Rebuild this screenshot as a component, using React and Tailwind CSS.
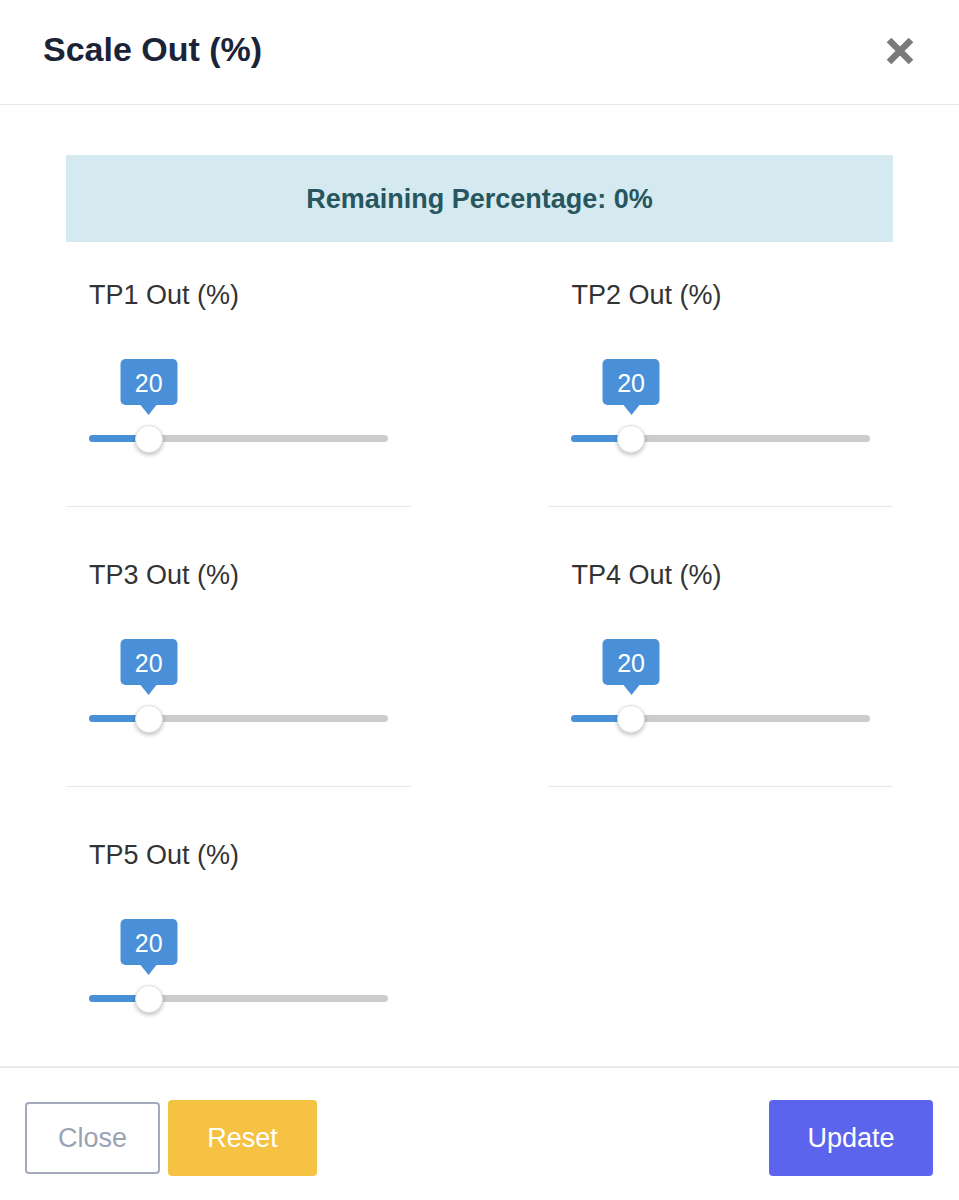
const targets = [
  { name: "TP1", value: 20 },
  { name: "TP2", value: 20 },
  { name: "TP3", value: 20 },
  { name: "TP4", value: 20 },
  { name: "TP5", value: 20 },
];

function Slider({ value }) {
  const pct = `${value}%`;
  return (
    <div className="relative h-[96px]">
      {/* track */}
      <div className="absolute left-0 right-0 top-[77px] h-[7px] rounded-full bg-[#cccccc]" />
      <div
        className="absolute left-0 top-[77px] h-[7px] rounded-full bg-[#4a90d9]"
        style={{ width: pct }}
      />
      {/* thumb */}
      <div
        className="absolute top-[67px] h-[28px] w-[28px] -translate-x-1/2 rounded-full border border-[#e2e2e2] bg-white shadow-[0_2px_4px_rgba(0,0,0,0.25)]"
        style={{ left: pct }}
      />
      {/* value bubble */}
      <div
        className="absolute top-[1px] -translate-x-1/2"
        style={{ left: pct }}
      >
        <div className="flex h-[46px] w-[57px] items-center justify-center rounded-[5px] bg-[#4a90d9] pt-[2px] text-[25px] leading-none text-white">
          {value}
        </div>
        <div className="mx-auto h-0 w-0 border-x-[8px] border-t-[10px] border-x-transparent border-t-[#4a90d9]" />
      </div>
    </div>
  );
}

export default function App() {
  return (
    <div
      className="flex h-[1200px] w-[959px] flex-col bg-white"
      style={{ fontFamily: '"Liberation Sans", Arial, sans-serif' }}
    >
      {/* Header */}
      <div className="flex h-[105px] items-center justify-between border-b border-[#e6e8ee] pb-[6px] pl-[43px] pr-[44px]">
        <h2 className="text-[34px] font-bold leading-[40px] text-[#1b2437]">
          Scale Out (%)
        </h2>
        <button className="mt-[4px] flex h-[30px] w-[30px] items-center justify-center">
          <svg width="30" height="30" viewBox="0 0 30 30">
            <line x1="4" y1="4" x2="26" y2="26" stroke="#7a7a7a" strokeWidth="6.5" />
            <line x1="26" y1="4" x2="4" y2="26" stroke="#7a7a7a" strokeWidth="6.5" />
          </svg>
        </button>
      </div>

      {/* Body */}
      <div className="flex-1 px-[66px] pt-[50px]">
        <div className="flex h-[87px] items-center justify-center bg-[#d5eaf0]">
          <p className="pt-[2px] text-[27px] font-bold text-[#27565f]">
            Remaining Percentage: 0%
          </p>
        </div>

        <div className="grid grid-cols-12">
          {targets.map((t, i) => (
            <div
              key={t.name}
              className={`col-span-5 px-[23px] pb-[52px] ${
                i % 2 === 1 ? "col-start-8" : "col-start-1"
              } ${i < 2 ? "pt-[33px]" : "pt-[48px]"} ${
                i < 4 ? "border-b border-[#e8e9f0]" : ""
              }`}
            >
              <p className="text-[27px] leading-[40px] text-[#333333]">
                {t.name} Out (%)
              </p>
              <div className="mt-[43px]">
                <Slider value={t.value} />
              </div>
            </div>
          ))}
        </div>
      </div>

      {/* Footer */}
      <div className="flex h-[134px] items-center justify-between border-t-2 border-[#e9eaee] pl-[25px] pr-[26px] pt-[8px]">
        <div className="flex items-center gap-[8px]">
          <button className="h-[72px] w-[135px] rounded-[4px] border-2 border-[#a3abbb] text-[27px] text-[#9aa3b4]">
            Close
          </button>
          <button className="h-[76px] w-[149px] rounded-[4px] bg-[#f6c244] text-[27px] text-white">
            Reset
          </button>
        </div>
        <button className="h-[76px] w-[164px] rounded-[4px] bg-[#5c64ee] text-[27px] text-white">
          Update
        </button>
      </div>
    </div>
  );
}
